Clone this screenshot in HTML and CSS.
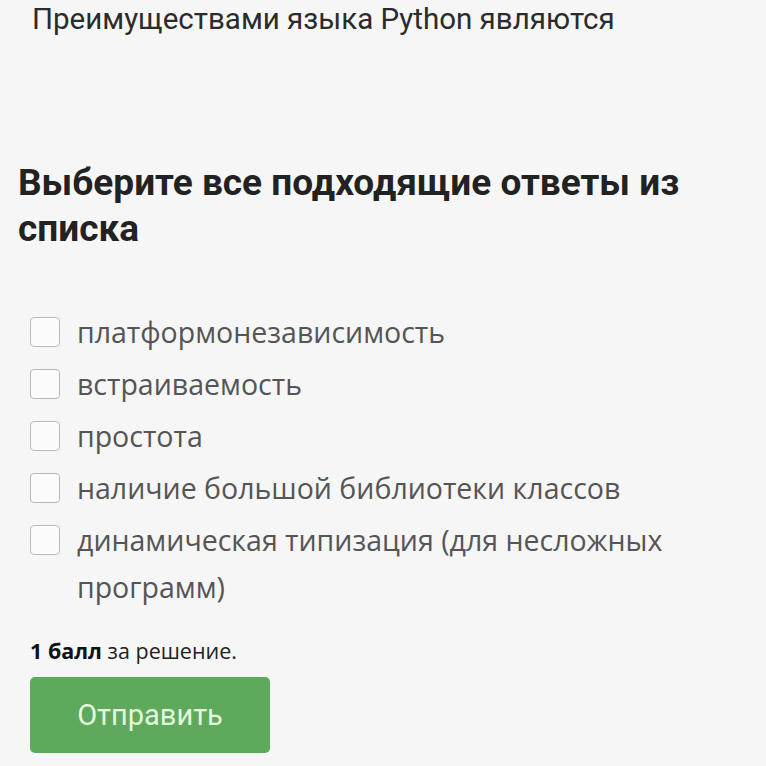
FILE: index.html
```html
<!DOCTYPE html>
<html lang="ru">
  <head>
    <meta charset="UTF-8" />
    <meta name="viewport" content="width=device-width, initial-scale=1.0" />
    <title>Шаг задания</title>
    <link rel="stylesheet" href="styles.css">
  </head>
  <body>
    <div class="step">
      <p class="question">Преимуществами языка Python являются</p>

      <h2 class="task">Выберите все подходящие ответы из списка</h2>

      <div class="options">
        <label class="option"><span class="box"></span><span class="label">платформонезависимость</span></label>
        <label class="option"><span class="box"></span><span class="label">встраиваемость</span></label>
        <label class="option"><span class="box"></span><span class="label">простота</span></label>
        <label class="option"><span class="box"></span><span class="label">наличие большой библиотеки классов</span></label>
        <label class="option"><span class="box"></span><span class="label">динамическая типизация (для несложных программ)</span></label>
      </div>

      <p class="score"><b>1 балл</b> за решение.</p>
      <button class="submit">Отправить</button>
    </div>
  </body>
</html>
```

FILE: styles.css
```css
body {
  margin: 0;
  padding: 0;
  background: #f6f6f6;
  font-family: Roboto, "Noto Sans", sans-serif;
  color: #333;
}

.step {
  padding: 0 0 0 18px;
  width: 700px;
}

.question {
  margin: 0;
  padding: 2px 0 0 14px;
  font-size: 29.5px;
  line-height: 34px;
  color: #2b2b2b;
}

.task {
  margin: 124px 0 0;
  font-size: 37px;
  font-weight: 700;
  line-height: 46px;
  color: #222;
}

.options {
  margin-top: 57px;
  padding-left: 12px;
}

.option {
  display: flex;
  align-items: flex-start;
  gap: 17px;
  margin-bottom: 5px;
  font-family: "Open Sans", "Noto Sans", sans-serif;
  font-size: 28.5px;
  line-height: 47px;
  color: #555;
}

.box {
  flex: none;
  width: 28px;
  height: 28px;
  margin-top: 8px;
  border: 1px solid #b9b9b9;
  border-radius: 4px;
  background: #fbfbfb;
}

.label {
  max-width: 620px;
}

.score {
  margin: 25px 0 0 12px;
  font-family: "Open Sans", "Noto Sans", sans-serif;
  font-size: 21.5px;
  color: #222;
}

.score b {
  font-weight: 700;
  color: #111;
}

.submit {
  margin: 12px 0 0 12px;
  width: 240px;
  height: 76px;
  border: none;
  border-radius: 5px;
  background: #5fa95c;
  color: #e4f7dc;
  font-family: Roboto, sans-serif;
  font-size: 29px;
  cursor: pointer;
}
```
